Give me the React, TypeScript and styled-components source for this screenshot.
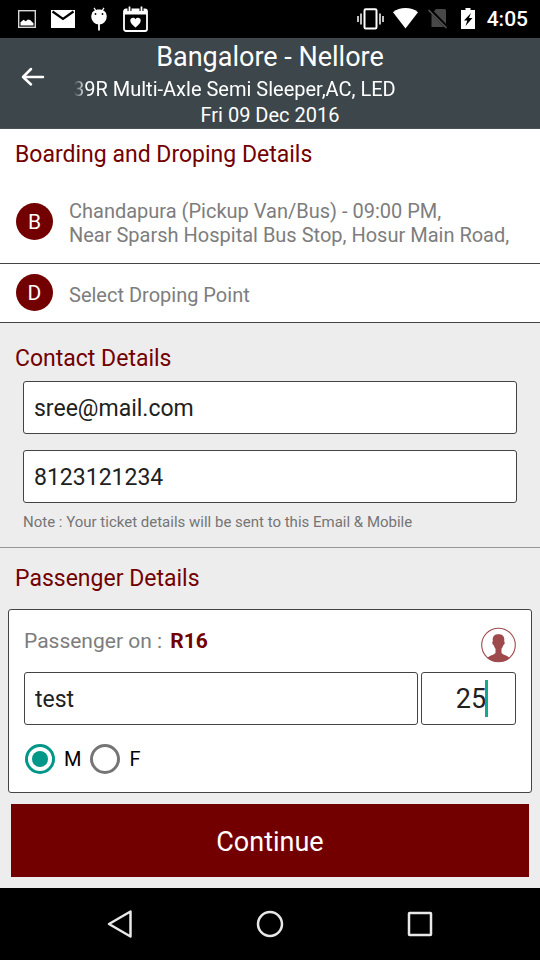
import React, { useState } from "react";
import styled, { createGlobalStyle } from "styled-components";

const maroon = "#730000";
const teal = "#009688";
const line = "#444444";

const GlobalStyle = createGlobalStyle`
  *, *::before, *::after { box-sizing: border-box; }
  body { margin: 0; background: #ededed; }
  body, input, button { font-family: Roboto, "Liberation Sans", sans-serif; }
`;

const Screen = styled.div`
  display: flex;
  flex-direction: column;
  min-height: 100vh;
  background: #ededed;
`;

const StatusBar = styled.div`
  display: flex;
  justify-content: space-between;
  height: 38px;
  padding: 0 12px 0 18px;
  background: #000;
  color: #fff;
`;

const StatusGroup = styled.div<{ $gap: number }>`
  display: flex;
  align-items: center;
  gap: ${(p) => p.$gap}px;
  svg { display: block; }
`;

const Clock = styled.time`
  font-size: 21px;
  font-weight: 500;
  line-height: 40px;
`;

const Header = styled.header`
  display: grid;
  grid-template-columns: 66px 1fr 66px;
  background: #3c464b;
  color: #fff;
  border-bottom: 1px solid #4b5256;
`;

const BackButton = styled.button`
  display: flex;
  align-items: center;
  justify-content: center;
  height: 78px;
  padding: 0;
  border: 0;
  background: none;
  color: inherit;
`;

const Trip = styled.div`
  display: flex;
  flex-direction: column;
  min-width: 0;
  text-align: center;
`;

const Route = styled.h1`
  margin: 0;
  font-size: 27px;
  font-weight: 400;
  line-height: 38px;
`;

const Marquee = styled.div`
  padding-left: 7px;
  overflow: hidden;
  white-space: nowrap;
  text-align: left;
  font-size: 20px;
  line-height: 26px;
  mask-image: linear-gradient(to right, transparent 8px, #000 20px);
`;

const TravelDate = styled.div`
  font-size: 20px;
  line-height: 26px;
`;

const Points = styled.section`
  background: #fff;
`;

const SectionTitle = styled.h2<{ $height: number }>`
  margin: 0;
  padding-left: 15px;
  color: ${maroon};
  font-size: 23px;
  font-weight: 400;
  line-height: ${(p) => p.$height}px;
`;

const PointRow = styled.button<{ $height: number }>`
  display: flex;
  align-items: center;
  gap: 16px;
  width: 100%;
  min-height: ${(p) => p.$height}px;
  padding: 0 16px 1px;
  border: 0;
  border-bottom: 1px solid ${line};
  background: none;
  text-align: left;
`;

const Badge = styled.span`
  flex: none;
  width: 37px;
  height: 37px;
  border-radius: 50%;
  background: ${maroon};
  color: #fff;
  font-size: 21px;
  line-height: 38px;
  text-align: center;
`;

const PointText = styled.span`
  padding-top: 4px;
  color: #7d7d7d;
  font-size: 20px;
  line-height: 24px;
`;

const Contact = styled.section`
  padding: 13px 0 14px;
  border-bottom: 1px solid #979797;
`;

const Fields = styled.div`
  display: flex;
  flex-direction: column;
  gap: 16px;
  padding: 0 23px;
`;

const TextBox = styled.input<{ $large?: boolean }>`
  display: block;
  width: 100%;
  height: 53px;
  padding: ${(p) => (p.$large ? "0 8px 0 13px" : "1px 10px 0")};
  border: 1px solid ${line};
  border-radius: 3px;
  outline: 0;
  background: #fff;
  color: #212121;
  font-size: ${(p) => (p.$large ? 27 : 23)}px;
  text-align: ${(p) => (p.$large ? "center" : "left")};
`;

const Note = styled.p`
  margin: 0;
  padding: 8px 23px 0;
  color: #757575;
  font-size: 15px;
  line-height: 22px;
`;

const Card = styled.section`
  margin: 0 8px;
  padding: 17px 15px 18px;
  border: 1px solid ${line};
  border-radius: 3px;
  background: #fff;
`;

const CardHead = styled.div`
  display: flex;
  align-items: center;
  justify-content: space-between;
  height: 36px;
  svg { display: block; }
`;

const SeatText = styled.p`
  margin: 0 0 8px;
  color: #7d7d7d;
  font-size: 21px;
  line-height: 28px;
`;

const Seat = styled.strong`
  margin-left: 3px;
  color: ${maroon};
  font-weight: 700;
`;

const PassengerFields = styled.div`
  display: grid;
  grid-template-columns: 1fr 95px;
  gap: 3px;
  margin-top: 9px;
`;

const AgeField = styled.div`
  position: relative;
  input { caret-color: transparent; }
`;

const Cursor = styled.span`
  position: absolute;
  top: 8px;
  left: calc(50% + 16px);
  width: 3px;
  height: 37px;
  background: #12a98f;
`;

const Genders = styled.div`
  display: flex;
  gap: 8px;
  margin-top: 19px;
`;

const RadioLabel = styled.label`
  display: flex;
  align-items: center;
  gap: 9px;
  padding-left: 1px;
  color: #000;
  font-size: 20px;
  line-height: 30px;
`;

const Radio = styled.input`
  appearance: none;
  display: grid;
  place-items: center;
  width: 30px;
  height: 30px;
  margin: 0;
  border: 3px solid #757575;
  border-radius: 50%;
  &:checked { border-color: ${teal}; }
  &:checked::before {
    content: "";
    width: 16px;
    height: 16px;
    border-radius: 50%;
    background: ${teal};
  }
`;

const ContinueButton = styled.button`
  height: 73px;
  margin: 11px;
  padding-top: 3px;
  border: 0;
  background: ${maroon};
  color: #fff;
  font-size: 27px;
`;

const NavBar = styled.nav`
  display: grid;
  grid-template-columns: repeat(3, 150px);
  justify-content: center;
  height: 72px;
  margin-top: auto;
  background: #000;
`;

const NavButton = styled.button`
  display: grid;
  place-items: center;
  padding: 0;
  border: 0;
  background: none;
`;

const ImageIcon = () => (
  <svg width="18" height="18" viewBox="0 0 18 18">
    <rect x="0.7" y="0.7" width="16.6" height="16.6" fill="none" stroke="#d8d8d8" strokeWidth="1.4" />
    <path d="M2.5 15.5v-3.2l3-2.6 2.2 1.6 2.2-1.8 2.2.4 3.4 3.4v2.2z" fill="#fff" />
  </svg>
);

const MailIcon = () => (
  <svg width="24" height="18" viewBox="0 0 24 18">
    <path d="M0 0h24v18H0z" fill="#fff" />
    <path d="M1.5 1.5L12 9l10.5-7.5" fill="none" stroke="#000" strokeWidth="2.2" />
  </svg>
);

const DebugIcon = () => (
  <svg width="18" height="24" viewBox="0 0 18 24">
    <path d="M4 0.8l2 3M14 0.8l-2 3" stroke="#fff" strokeWidth="1.2" />
    <path d="M1.3 9.5C1.3 5 4.5 2.5 9 2.5S16.7 5 16.7 9.5 13 17.5 9 17.5 1.3 14 1.3 9.5z" fill="#fff" />
    <path d="M9 17v6.5" stroke="#fff" strokeWidth="1.8" />
    <circle cx="5.5" cy="7" r="0.9" />
    <circle cx="12.5" cy="7" r="0.9" />
  </svg>
);

const CalendarIcon = () => (
  <svg width="25" height="26" viewBox="0 0 25 26">
    <rect x="1" y="3.5" width="23" height="21.5" rx="2" fill="none" stroke="#fff" strokeWidth="1.8" />
    <path d="M1 3.5h23v5H1z" fill="#fff" />
    <path d="M6.5 0v5M18.5 0v5" stroke="#000" strokeWidth="4" />
    <path d="M6.5 0.5v4.5M18.5 0.5v4.5" stroke="#fff" strokeWidth="1.8" />
    <path d="M12.5 21.5C9 18.5 7.3 17 7.3 14.5c0-3 3.7-3.6 5.2-1.3 1.5-2.3 5.2-1.7 5.2 1.3 0 2.5-1.7 4-5.2 7z" fill="#fff" />
  </svg>
);

const VibrateIcon = () => (
  <svg width="27" height="22" viewBox="0 0 27 22">
    <rect x="7.5" y="1.2" width="12" height="19.3" rx="1.2" fill="none" stroke="#fff" strokeWidth="2" />
    <path d="M1 8v6M4 5.5v11M23 5.5v11M26 8v6" stroke="#fff" strokeWidth="1.5" />
  </svg>
);

const WifiIcon = () => (
  <svg width="25" height="22" viewBox="0 0 25 22">
    <path d="M12.5 20.5L0 4.3C3.5 1.300 7.700 0 12.500 0S21.500 1.300 25 4.300z" fill="#fff" />
  </svg>
);

const NoSimIcon = () => (
  <svg width="22" height="22" viewBox="0 0 22 22">
    <path d="M9 1h8.5q1.5 0 1.500 1.500V19H4.500V6z" fill="#484848" />
    <path d="M2.500 1.500L20 19.500" stroke="#000" strokeWidth="3.500" />
    <path d="M1.500 2L19.500 20" stroke="#555" strokeWidth="1.600" />
  </svg>
);

const BatteryIcon = () => (
  <svg width="20" height="22" viewBox="0 0 20 22">
    <path d="M7.500 0h5v2H17v19H3V2h4.500z" fill="#fff" />
    <path d="M13 5L6 12.500h3.300L7.500 18 14.500 10H11z" fill="#000" />
  </svg>
);

const BackArrow = () => (
  <svg width="24" height="20" viewBox="0 0 24 20" fill="none" stroke="#fff" strokeWidth="2.5" strokeLinecap="round" strokeLinejoin="round">
    <path d="M22 10H2M10 2L2 10l8 7.500" />
  </svg>
);

const PersonIcon = () => (
  <svg width="36" height="36" viewBox="0 0 36 36">
    <circle cx="18.500" cy="18" r="16.800" fill="#fff" stroke="#9e4a4d" strokeWidth="1.100" />
    <path
      d="M18.500 7.300c3.800 0 6 2 5.800 5.700l-.1 1.400c.9.300.6 2-.1 3.200-.3.600-.6.700-.9.700-.3 1.500-1 2.700-1.700 3.500v3.700c0 1.600 3.500 2.500 6 3.700 1 .5 1.700 1.300 2.200 2.100A17 17 0 0 1 18.500 34.800 17 17 0 0 1 7.300 31.300c.5-.8 1.200-1.600 2.200-2.100 2.500-1.200 6-2.100 6-3.700v-3.700c-.7-.8-1.400-2-1.700-3.500-.3 0-.6-.1-.9-.7-.7-1.200-1-2.900-.1-3.200l-.1-1.400C12.500 9.300 14.700 7.300 18.500 7.300z"
      fill="#9e4a4d"
    />
  </svg>
);

const navIcons = [
  { label: "Back", shape: <path d="M26.500 3.500v25L5 16z" /> },
  { label: "Home", shape: <circle cx="16" cy="16" r="12" /> },
  { label: "Recent apps", shape: <rect x="5" y="5" width="22" height="22" rx="0.5" /> },
];

export default function App() {
  const [email, setEmail] = useState("sree@mail.com");
  const [mobile, setMobile] = useState("8123121234");
  const [name, setName] = useState("test");
  const [age, setAge] = useState("25");
  const [gender, setGender] = useState("M");

  return (
    <Screen>
      <GlobalStyle />
      <StatusBar>
        <StatusGroup $gap={15}>
          <ImageIcon />
          <MailIcon />
          <DebugIcon />
          <CalendarIcon />
        </StatusGroup>
        <StatusGroup $gap={9}>
          <VibrateIcon />
          <WifiIcon />
          <NoSimIcon />
          <BatteryIcon />
          <Clock>4:05</Clock>
        </StatusGroup>
      </StatusBar>

      <Header>
        <BackButton aria-label="Back"><BackArrow /></BackButton>
        <Trip>
          <Route>Bangalore - Nellore</Route>
          <Marquee>39R Multi-Axle Semi Sleeper,AC, LED</Marquee>
          <TravelDate>Fri 09 Dec 2016</TravelDate>
        </Trip>
      </Header>

      <Points>
        <SectionTitle $height={51}>Boarding and Droping Details</SectionTitle>
        <PointRow $height={84}>
          <Badge>B</Badge>
          <PointText>
            Chandapura (Pickup Van/Bus) - 09:00 PM,
            <br />
            Near Sparsh Hospital Bus Stop, Hosur Main Road,
          </PointText>
        </PointRow>
        <PointRow $height={59}>
          <Badge>D</Badge>
          <PointText>Select Droping Point</PointText>
        </PointRow>
      </Points>

      <Contact>
        <SectionTitle $height={45}>Contact Details</SectionTitle>
        <Fields>
          <TextBox aria-label="Email" type="text" value={email} onChange={(e) => setEmail(e.target.value)} />
          <TextBox aria-label="Mobile" type="tel" value={mobile} onChange={(e) => setMobile(e.target.value)} />
        </Fields>
        <Note>Note : Your ticket details will be sent to this Email &amp; Mobile</Note>
      </Contact>

      <SectionTitle $height={61}>Passenger Details</SectionTitle>
      <Card>
        <CardHead>
          <SeatText>Passenger on : <Seat>R16</Seat></SeatText>
          <PersonIcon />
        </CardHead>
        <PassengerFields>
          <TextBox aria-label="Name" value={name} onChange={(e) => setName(e.target.value)} />
          <AgeField>
            <TextBox $large aria-label="Age" inputMode="numeric" value={age} onChange={(e) => setAge(e.target.value)} />
            <Cursor />
          </AgeField>
        </PassengerFields>
        <Genders>
          {["M", "F"].map((g) => (
            <RadioLabel key={g}>
              <Radio type="radio" name="gender" value={g} checked={gender === g} onChange={() => setGender(g)} />
              {g}
            </RadioLabel>
          ))}
        </Genders>
      </Card>
      <ContinueButton>Continue</ContinueButton>

      <NavBar>
        {navIcons.map(({ label, shape }) => (
          <NavButton key={label} aria-label={label}>
            <svg width="32" height="32" viewBox="0 0 32 32" fill="none" stroke="#e8e8e8" strokeWidth="2.5" strokeLinejoin="round">
              {shape}
            </svg>
          </NavButton>
        ))}
      </NavBar>
    </Screen>
  );
}
